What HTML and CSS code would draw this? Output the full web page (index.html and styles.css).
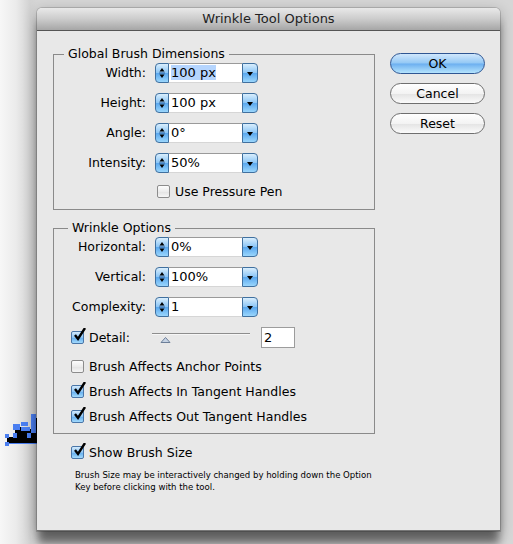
FILE: index.html
```html
<!DOCTYPE html>
<html lang="en">
<head>
  <meta charset="UTF-8">
  <title>Wrinkle Tool Options</title>
  <link rel="stylesheet" href="styles.css">
</head>
<body>
  <!-- stray cursor selection left on the desktop -->
  <svg class="desk-mark" width="37" height="38" viewBox="0 0 37 38">
    <path d="M7 27H15V19H20V17H28V19H33V8H37V33H7z" fill="#000"/>
    <rect x="31" y="4" width="5" height="19" fill="#4a7ef0"/>
    <rect x="13" y="14" width="7" height="6" fill="#4a7ef0"/>
    <rect x="21" y="12" width="7" height="4" fill="#4a7ef0"/>
    <rect x="21" y="17" width="9" height="4" fill="#4a7ef0"/>
    <rect x="27" y="23" width="4" height="5" fill="#4a7ef0"/>
    <rect x="13" y="23" width="4" height="5" fill="#4a7ef0"/>
    <rect x="5" y="24" width="4" height="4" fill="#4a7ef0"/>
    <rect x="5" y="32" width="4" height="4" fill="#4a7ef0"/>
    <rect x="7" y="33" width="30" height="1" fill="#4a7ef0"/>
  </svg>

  <div class="window">
    <div class="titlebar">Wrinkle Tool Options</div>
    <div class="content">
      <div class="main">
        <fieldset class="group group-brush">
          <legend>Global Brush Dimensions</legend>
          <div class="fields">
            <span class="field-label">Width:</span>
            <div class="combo">
              <span class="stepper"><svg width="12" height="18" viewBox="0 0 12 18"><path d="M3.5 7.5h5L6 4z M3.5 10.5h5L6 14z" fill="#000"/><path d="M3 9h6" stroke="#2f5f99"/></svg></span>
              <span class="combo-input"><span class="selected">100 px</span></span>
              <span class="combo-menu"><svg width="14" height="18" viewBox="0 0 14 18"><path d="M4 8h6l-3 4z" fill="#000"/></svg></span>
            </div>
            <span class="field-label">Height:</span>
            <div class="combo">
              <span class="stepper"><svg width="12" height="18" viewBox="0 0 12 18"><path d="M3.5 7.5h5L6 4z M3.5 10.5h5L6 14z" fill="#000"/><path d="M3 9h6" stroke="#2f5f99"/></svg></span>
              <span class="combo-input">100 px</span>
              <span class="combo-menu"><svg width="14" height="18" viewBox="0 0 14 18"><path d="M4 8h6l-3 4z" fill="#000"/></svg></span>
            </div>
            <span class="field-label">Angle:</span>
            <div class="combo">
              <span class="stepper"><svg width="12" height="18" viewBox="0 0 12 18"><path d="M3.5 7.5h5L6 4z M3.5 10.5h5L6 14z" fill="#000"/><path d="M3 9h6" stroke="#2f5f99"/></svg></span>
              <span class="combo-input">0°</span>
              <span class="combo-menu"><svg width="14" height="18" viewBox="0 0 14 18"><path d="M4 8h6l-3 4z" fill="#000"/></svg></span>
            </div>
            <span class="field-label">Intensity:</span>
            <div class="combo">
              <span class="stepper"><svg width="12" height="18" viewBox="0 0 12 18"><path d="M3.5 7.5h5L6 4z M3.5 10.5h5L6 14z" fill="#000"/><path d="M3 9h6" stroke="#2f5f99"/></svg></span>
              <span class="combo-input">50%</span>
              <span class="combo-menu"><svg width="14" height="18" viewBox="0 0 14 18"><path d="M4 8h6l-3 4z" fill="#000"/></svg></span>
            </div>
            <span></span>
            <div class="check check-pressure"><span class="box"></span>Use Pressure Pen</div>
          </div>
        </fieldset>

        <fieldset class="group group-wrinkle">
          <legend>Wrinkle Options</legend>
          <div class="fields">
            <span class="field-label">Horizontal:</span>
            <div class="combo">
              <span class="stepper"><svg width="12" height="18" viewBox="0 0 12 18"><path d="M3.5 7.5h5L6 4z M3.5 10.5h5L6 14z" fill="#000"/><path d="M3 9h6" stroke="#2f5f99"/></svg></span>
              <span class="combo-input">0%</span>
              <span class="combo-menu"><svg width="14" height="18" viewBox="0 0 14 18"><path d="M4 8h6l-3 4z" fill="#000"/></svg></span>
            </div>
            <span class="field-label">Vertical:</span>
            <div class="combo">
              <span class="stepper"><svg width="12" height="18" viewBox="0 0 12 18"><path d="M3.5 7.5h5L6 4z M3.5 10.5h5L6 14z" fill="#000"/><path d="M3 9h6" stroke="#2f5f99"/></svg></span>
              <span class="combo-input">100%</span>
              <span class="combo-menu"><svg width="14" height="18" viewBox="0 0 14 18"><path d="M4 8h6l-3 4z" fill="#000"/></svg></span>
            </div>
            <span class="field-label">Complexity:</span>
            <div class="combo">
              <span class="stepper"><svg width="12" height="18" viewBox="0 0 12 18"><path d="M3.5 7.5h5L6 4z M3.5 10.5h5L6 14z" fill="#000"/><path d="M3 9h6" stroke="#2f5f99"/></svg></span>
              <span class="combo-input">1</span>
              <span class="combo-menu"><svg width="14" height="18" viewBox="0 0 14 18"><path d="M4 8h6l-3 4z" fill="#000"/></svg></span>
            </div>
          </div>
          <div class="detail-row">
            <div class="check detail-label"><span class="box checked"><svg width="15" height="15" viewBox="0 0 15 15"><path d="M3 7l3 4 7-11" fill="none" stroke="#000" stroke-width="2.4"/></svg></span>Detail:</div>
            <div class="slider"><svg class="thumb" width="11" height="6" viewBox="0 0 11 6"><path d="M1 5.5h9L5.5 .5z" fill="#c6d3e4" stroke="#6d7f99"/></svg></div>
            <span class="number">2</span>
          </div>
          <div class="check-list">
            <div class="check"><span class="box"></span>Brush Affects Anchor Points</div>
            <div class="check"><span class="box checked"><svg width="15" height="15" viewBox="0 0 15 15"><path d="M3 7l3 4 7-11" fill="none" stroke="#000" stroke-width="2.4"/></svg></span>Brush Affects In Tangent Handles</div>
            <div class="check"><span class="box checked"><svg width="15" height="15" viewBox="0 0 15 15"><path d="M3 7l3 4 7-11" fill="none" stroke="#000" stroke-width="2.4"/></svg></span>Brush Affects Out Tangent Handles</div>
          </div>
        </fieldset>

        <div class="check show-size"><span class="box checked"><svg width="15" height="15" viewBox="0 0 15 15"><path d="M3 7l3 4 7-11" fill="none" stroke="#000" stroke-width="2.4"/></svg></span>Show Brush Size</div>
        <p class="note">Brush Size may be interactively changed by holding down the Option Key before clicking with the tool.</p>
      </div>

      <div class="buttons">
        <button class="btn btn-default">OK</button>
        <button class="btn">Cancel</button>
        <button class="btn">Reset</button>
      </div>
    </div>
  </div>
</body>
</html>
```

FILE: styles.css
```css
html {
  background: #d6d6d6;
}
body {
  margin: 0;
  padding: 8px 0 0 37px;
  height: 544px;
  box-sizing: border-box;
  overflow: hidden;
  font-family: "DejaVu Sans", "Liberation Sans", sans-serif;
  font-size: 12.5px;
  color: #000;
  background: linear-gradient(90deg, #f7f7f7 0, #ebebeb 16px, #d2d2d2 30px, #d6d6d6 37px);
  position: relative;
}
.desk-mark {
  position: absolute;
  left: 0;
  top: 410px;
}
.window {
  position: relative;
  z-index: 1;
  width: 463px;
  height: 523px;
  background: #e8e8e8;
  border-radius: 5px 5px 0 0;
  border-bottom: 1px solid #777;
  box-sizing: border-box;
  box-shadow: 0 14px 8px -1px rgba(0, 0, 0, 0.45), 0 4px 14px rgba(0, 0, 0, 0.3), 0 0 0 1px rgba(0, 0, 0, 0.15);
}
.titlebar {
  height: 22px;
  line-height: 22px;
  text-align: center;
  font-size: 13px;
  color: #222;
  border-radius: 5px 5px 0 0;
  background: linear-gradient(#e9e9e9, #cccccc 50%, #a6a6a6);
  border-bottom: 1px solid #555;
}
.content {
  display: flex;
  padding: 0 15px 0 16px;
}
.main {
  width: 322px;
}
.group {
  margin: 15px 0 0;
  padding: 0;
  border: 1px solid #8a8a8a;
  min-width: 0;
}
.group legend {
  margin-left: 10px;
  padding: 0 4px;
  line-height: 16px;
}
.group-wrinkle {
  margin-top: 10px;
}
.group-wrinkle legend {
  margin-left: 14px;
}
.fields {
  display: grid;
  grid-template-columns: 92px auto;
  column-gap: 9px;
  row-gap: 10px;
  align-items: center;
  padding-top: 1px;
}
.group-brush .fields {
  padding-bottom: 8px;
}
.field-label {
  text-align: right;
  line-height: 20px;
}
.combo {
  display: flex;
  height: 20px;
}
.stepper,
.combo-menu {
  display: flex;
  align-items: center;
  justify-content: center;
  box-sizing: border-box;
  border: 1px solid #40709f;
  background: linear-gradient(#d9eefd, #8cc6f6 48%, #5ba8ee 52%, #9ad6fc);
}
.stepper {
  width: 14px;
  border-radius: 4px 0 0 4px;
}
.combo-menu {
  width: 16px;
  border-radius: 0 4px 4px 0;
}
.combo-input {
  width: 73px;
  box-sizing: border-box;
  padding-left: 2px;
  background: #fff;
  border-top: 1px solid #9a9a9a;
  border-bottom: 1px solid #d6d6d6;
  line-height: 18px;
  font-size: 13px;
}
.selected {
  background: #b5d5fe;
}
.check {
  display: flex;
  align-items: center;
  height: 20px;
}
.box {
  width: 13px;
  height: 13px;
  margin-right: 5px;
  box-sizing: border-box;
  border: 1px solid #8c8c8c;
  border-radius: 2px;
  background: linear-gradient(#fdfdfd, #ececec 50%, #e2e2e2 51%, #f6f6f6);
  position: relative;
}
.box.checked {
  border-color: #4a76a8;
  background: linear-gradient(#d4ebfd, #8dc5f5 50%, #62acee 51%, #a3dafc);
}
.box svg {
  position: absolute;
  left: 0;
  top: -4px;
}
.check-pressure {
  margin: -2px 0 0 2px;
}
.detail-row {
  display: flex;
  align-items: center;
  height: 20px;
  margin-top: 10px;
  padding-left: 17px;
}
.detail-label {
  width: 81px;
}
.slider {
  position: relative;
  width: 98px;
  height: 20px;
  margin-right: 11px;
}
.slider::before {
  content: "";
  position: absolute;
  left: 0;
  right: 0;
  top: 6px;
  height: 1px;
  background: #8d8d8d;
  border-bottom: 1px solid #f6f6f6;
}
.thumb {
  position: absolute;
  left: 8px;
  top: 10px;
}
.number {
  width: 34px;
  height: 21px;
  box-sizing: border-box;
  border: 1px solid #9c9c9c;
  background: #fff;
  padding-left: 2px;
  line-height: 19px;
  font-size: 13px;
}
.check-list {
  display: flex;
  flex-direction: column;
  gap: 5px;
  padding: 9px 0 7px 17px;
}
.show-size {
  margin: 8px 0 0 18px;
}
.note {
  margin: 7px 0 0 22px;
  font-family: "DejaVu Sans Condensed", "DejaVu Sans", sans-serif;
  font-size: 9.5px;
  line-height: 12px;
  width: 310px;
}
.buttons {
  display: flex;
  flex-direction: column;
  gap: 9px;
  margin: 22px 0 0 15px;
}
.btn {
  width: 95px;
  height: 21px;
  padding: 0;
  font-family: inherit;
  font-size: 12.5px;
  color: #000;
  border: 1px solid #6f6f6f;
  border-radius: 11px;
  background: linear-gradient(#ffffff, #f3f3f3 50%, #e4e4e4 52%, #fbfbfb);
}
.btn-default {
  border-color: #2f5693;
  background: linear-gradient(#d0e7fc, #93c8f5 48%, #6caff0 52%, #b5e4fd);
}
```
